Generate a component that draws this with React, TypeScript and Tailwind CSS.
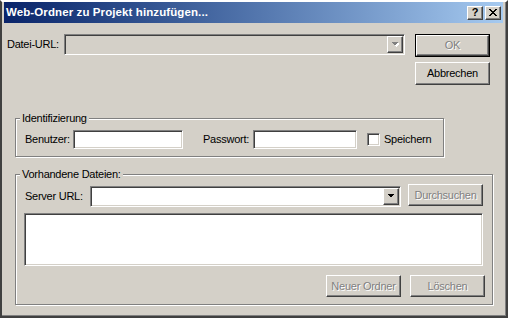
import React from "react";

// Win2000-Klassik-Rahmen
const raised =
  "border border-t-white border-l-white border-b-[#404040] border-r-[#404040] shadow-[inset_-1px_-1px_0_#808080]";
const sunken =
  "border border-t-[#808080] border-l-[#808080] border-b-white border-r-white shadow-[inset_1px_1px_0_#404040,inset_-1px_-1px_0_#d4d0c8]";
const disabledText = "text-[#808080] [text-shadow:1px_1px_0_#fff]";

export default function App() {
  return (
    <div className="w-[511px] h-[321px] bg-white font-['Liberation_Sans',Arial,sans-serif] text-[11px] tracking-[-0.25px] text-black">
      <div className="flex flex-col w-[508px] h-[318px] bg-[#d4d0c8] border-2 border-t-[#ffffff] border-l-[#404040] border-r-[#404040] border-b-[#404040] pl-[2px] pr-[3px] shadow-[inset_-1px_-1px_0_#808080]">
        <TitleBar />

        {/* ── Datei-URL + OK / Abbrechen ─────────────────────────────── */}
        <div className="flex mt-[11px]">
          <div className="flex items-start">
            <span className="w-[60px] pl-[3px] leading-[21px]">Datei-URL:</span>
            <Combo width="w-[341px]" disabled />
          </div>
          <div className="flex flex-col gap-[5px] ml-[10px]">
            <Button label="OK" isDefault disabled />
            <Button label="Abbrechen" />
          </div>
        </div>

        {/* ── Identifizierung ───────────────────────────────────────── */}
        <GroupBox title="Identifizierung" className="w-[429px] h-[39px] ml-[11px] mt-[33px]">
          <div className="flex items-center pl-[9px] pt-[11px]">
            <span className="w-[48px]">Benutzer:</span>
            <div className={`w-[110px] h-[19px] bg-white ${sunken}`} />
            <span className="w-[50px] ml-[20px]">Passwort:</span>
            <div className={`w-[104px] h-[19px] bg-white ${sunken}`} />
            <div className={`w-[13px] h-[13px] bg-white ml-[10px] ${sunken}`} />
            <span className="ml-[4px]">Speichern</span>
          </div>
        </GroupBox>

        {/* ── Vorhandene Dateien ────────────────────────────────────── */}
        <GroupBox title="Vorhandene Dateien:" className="w-[478px] h-[131px] ml-[11px] mt-[17px]">
          <div className="flex flex-col pl-[8px] pr-[9px] pt-[9px]">
            <div className="flex items-start">
              <span className="w-[66px] pl-[1px] mt-[2px] leading-[21px]">Server URL:</span>
              <div className="mt-[2px]">
                <Combo width="w-[311px]" />
              </div>
              <div className="ml-[7px]">
                <Button label="Durchsuchen" disabled h="h-[22px]" />
              </div>
            </div>
            <div className={`h-[53px] bg-white mt-[6px] ${sunken}`} />
            <div className="flex justify-end gap-[9px] mt-[9px] -mr-[2px]">
              <Button label="Neuer Ordner" disabled h="h-[22px]" />
              <Button label="Löschen" disabled h="h-[22px]" />
            </div>
          </div>
        </GroupBox>
      </div>
    </div>
  );
}

// ─── Subkomponenten ───────────────────────────────────────────────────────────

function TitleBar() {
  return (
    <div className="flex items-center h-[21px] bg-gradient-to-r from-[#0a246a] to-[#a6caf0]">
      <span className="pl-[2px] text-white font-bold text-[11.5px] tracking-[0.1px]">
        Web-Ordner zu Projekt hinzufügen...
      </span>
      <div className="ml-auto mr-[2px] flex gap-[2px]">
        <div className={`flex w-[16px] h-[14px] items-center justify-center bg-[#d4d0c8] ${raised}`}>
          <span className="font-bold text-[11px] leading-none">?</span>
        </div>
        <div className={`flex w-[16px] h-[14px] items-center justify-center bg-[#d4d0c8] ${raised}`}>
          <svg width="8" height="7" viewBox="0 0 8 7" shapeRendering="crispEdges">
            <path d="M0 0h2v1h-2zM6 0h2v1h-2zM1 1h2v1h-2zM5 1h2v1h-2zM2 2h4v1h-4zM3 3h2v1h-2zM2 4h4v1h-4zM1 5h2v1h-2zM5 5h2v1h-2zM0 6h2v1h-2zM6 6h2v1h-2z" fill="#000" />
          </svg>
        </div>
      </div>
    </div>
  );
}

function Combo({ width, disabled }: { width: string; disabled?: boolean }) {
  return (
    <div className={`flex justify-end p-[1px] h-[21px] ${width} ${disabled ? "bg-[#d4d0c8]" : "bg-white"} ${sunken}`}>
      <div className={`flex w-[16px] h-full items-center justify-center bg-[#d4d0c8] ${raised}`}>
        <svg width="8" height="5" viewBox="0 0 8 5" shapeRendering="crispEdges">
          {disabled && <path d="M2 1h7l-3.5 4z" fill="#fff" />}
          <path d="M0.5 0h7l-3.5 4z" fill={disabled ? "#808080" : "#000"} />
        </svg>
      </div>
    </div>
  );
}

function Button({
  label,
  disabled,
  isDefault,
  h = "h-[23px]",
}: {
  label: string;
  disabled?: boolean;
  isDefault?: boolean;
  h?: string;
}) {
  const inner = (
    <div
      className={`flex w-full h-full items-center justify-center bg-[#d4d0c8] ${raised} ${disabled ? disabledText : ""}`}
    >
      {label}
    </div>
  );
  if (isDefault) {
    return <div className={`w-[75px] ${h} border border-black`}>{inner}</div>;
  }
  return <div className={`w-[75px] ${h}`}>{inner}</div>;
}

function GroupBox({
  title,
  className,
  children,
}: {
  title: string;
  className: string;
  children: React.ReactNode;
}) {
  return (
    <div className={`relative border border-[#808080] shadow-[inset_1px_1px_0_#fff,1px_1px_0_#fff] ${className}`}>
      <span className="absolute left-[4px] -top-[7px] bg-[#d4d0c8] px-[2px] leading-[13px]">{title}</span>
      {children}
    </div>
  );
}
